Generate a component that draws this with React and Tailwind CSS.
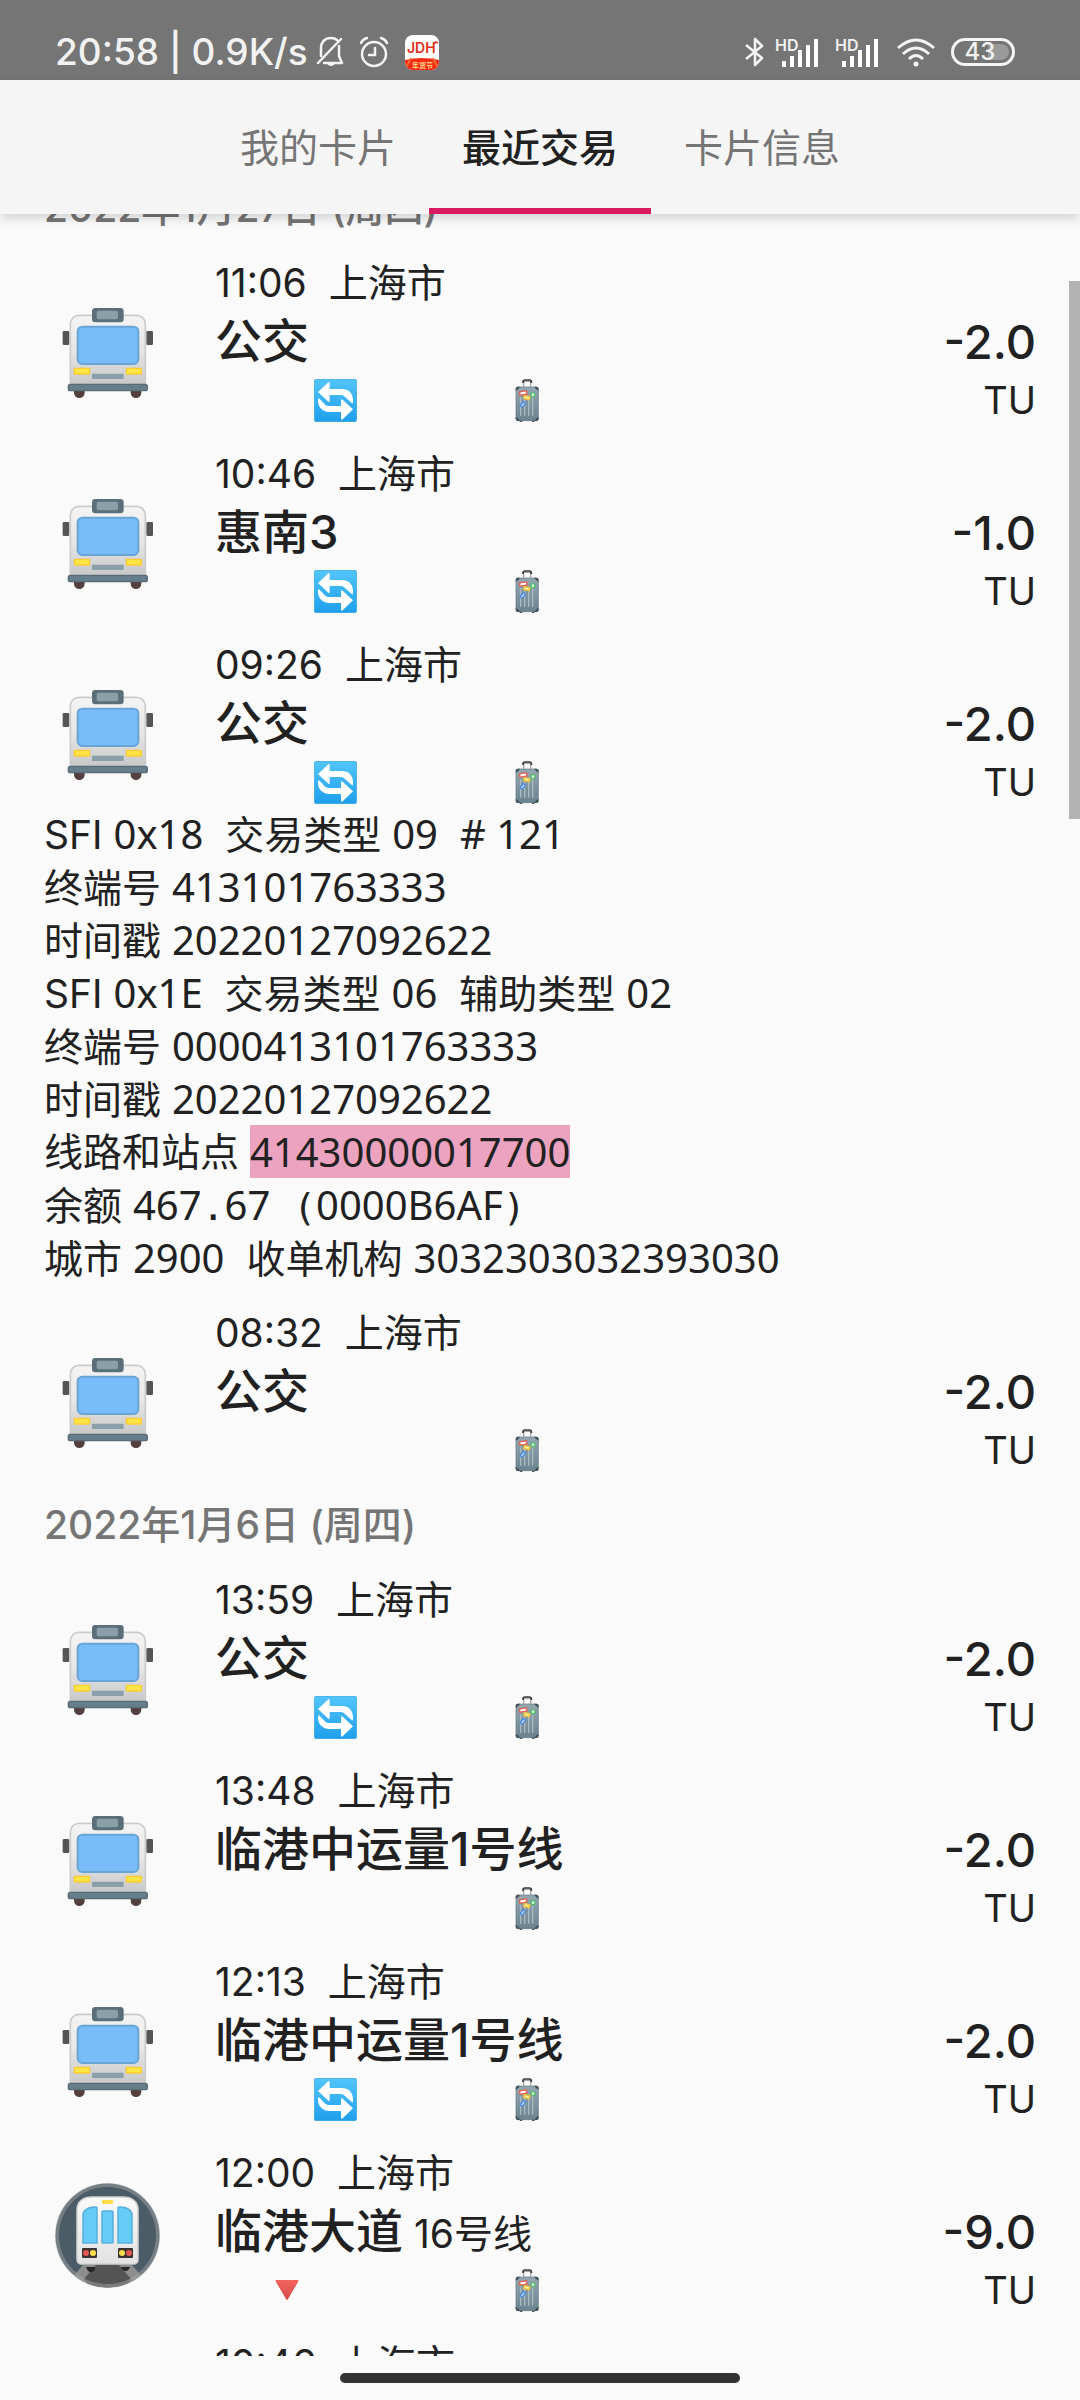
import React from "react";

const CJK = "font-['Inter','Noto_Sans_CJK_SC',sans-serif]";

const tabs = ["我的卡片", "最近交易", "卡片信息"];

const sections = [
  {
    date: "2022年1月27日 (周四)",
    rows: [
      { time: "11:06", title: "公交", transfer: true, amount: "-2.0" },
      { time: "10:46", title: "惠南3", transfer: true, amount: "-1.0" },
      { time: "09:26", title: "公交", transfer: true, amount: "-2.0", details: true },
      { time: "08:32", title: "公交", amount: "-2.0" },
    ],
  },
  {
    date: "2022年1月6日 (周四)",
    rows: [
      { time: "13:59", title: "公交", transfer: true, amount: "-2.0" },
      { time: "13:48", title: "临港中运量1号线", amount: "-2.0" },
      { time: "12:13", title: "临港中运量1号线", transfer: true, amount: "-2.0" },
      { time: "12:00", title: "临港大道", line: "16号线", metro: true, exit: true, amount: "-9.0" },
      { time: "10:46", title: "公交", amount: "-2.0" },
    ],
  },
];

function Bus() {
  return (
    <svg viewBox="15 9 315 315" className="size-[105px]" role="img" aria-label="公交车">
      <defs>
        <linearGradient id="busBody" x1="0" y1="0" x2="0" y2="1">
          <stop offset="0" stopColor="#f4f4f4" />
          <stop offset="0.5" stopColor="#e6e6e6" />
          <stop offset="1" stopColor="#c6c6c6" />
        </linearGradient>
      </defs>
      <path d="M72 300h32v8a16 16 0 0 1-32 0zM242 300h32v8a16 16 0 0 1-32 0z" fill="#543f3f" />
      <rect x="38" y="123" width="20" height="42" rx="4" fill="#555" />
      <rect x="289" y="123" width="20" height="42" rx="4" fill="#555" />
      <path d="M61 290V102a26 26 0 0 1 26-26h173a26 26 0 0 1 26 26v188z" fill="url(#busBody)" stroke="#cbcbcb" strokeWidth="5" />
      <rect x="126" y="54" width="95" height="43" rx="10" fill="#5b6f78" />
      <rect x="140" y="62" width="64" height="26" rx="6" fill="#8b9fa9" />
      <rect x="83" y="110" width="182" height="112" rx="14" fill="#78bdf9" stroke="#68a4d6" strokeWidth="6" />
      <rect x="73" y="235" width="46" height="17" rx="2" fill="#ffe645" stroke="#fbcb35" strokeWidth="4" />
      <rect x="229" y="235" width="45" height="17" rx="2" fill="#ffe645" stroke="#fbcb35" strokeWidth="4" />
      <rect x="126" y="251" width="95" height="16" rx="2" fill="#8b9fa9" />
      <rect x="55" y="283" width="237" height="19" rx="6" fill="#667e89" stroke="#586c76" strokeWidth="4" />
    </svg>
  );
}

function Metro() {
  return (
    <svg viewBox="0 0 105 105" className="size-[105px]" role="img" aria-label="地铁">
      <defs>
        <clipPath id="tunnel"><circle cx="52.500" cy="52.500" r="52" /></clipPath>
        <linearGradient id="metroBody" x1="0" y1="0" x2="0" y2="1">
          <stop offset="0" stopColor="#fafafa" />
          <stop offset="1" stopColor="#e2e2e2" />
        </linearGradient>
      </defs>
      <g clipPath="url(#tunnel)">
        <rect width="105" height="105" fill="#4c5c66" />
        <path d="M28 82h49l20 23H8z" fill="#8d8d8d" />
        <path d="M41 82h23l12 14-6 9H35l-6-9z" fill="#545454" />
      </g>
      <circle cx="52.500" cy="52.500" r="50.500" fill="none" stroke="#aaa" strokeOpacity="0.450" strokeWidth="4" />
      <path d="M31 84h9a4 4 0 0 1-8 2zM66 84h9l-1 2a4 4 0 0 1-7 0z" fill="#262626" />
      <path d="M22 76V27c0-9 7-13 15-13h31c8 0 15 4 15 13v49q0 5-5 5H27q-5 0-5-5z" fill="url(#metroBody)" stroke="#d2d2d2" strokeWidth="1.500" />
      <rect x="47" y="17" width="11" height="4" rx="1" fill="#fddc4a" />
      <g fill="#66cbf6" stroke="#56aeda" strokeWidth="1.500">
        <path d="M28 60V31q1-6 11-7h2q1 0 1 1v35z" />
        <rect x="47" y="28" width="11" height="32" rx="1" />
        <path d="M77 60V31q-1-6-11-7h-2q-1 0-1 1v35z" />
      </g>
      <rect x="27" y="65" width="15" height="10" rx="1" fill="#3b3331" />
      <rect x="63" y="65" width="15" height="10" rx="1" fill="#3b3331" />
      <circle cx="31" cy="70" r="3" fill="#e25550" />
      <circle cx="38" cy="70" r="3" fill="#fbdc4c" />
      <circle cx="67" cy="70" r="3" fill="#fbdc4c" />
      <circle cx="74" cy="70" r="3" fill="#e25550" />
    </svg>
  );
}

function Transfer() {
  return (
    <svg viewBox="39 27 129 129" className="size-[43px]" role="img" aria-label="换乘">
      <defs>
        <linearGradient id="transferBg" x1="0" y1="0" x2="0" y2="1">
          <stop offset="0" stopColor="#52c5fb" />
          <stop offset="1" stopColor="#1f9fec" />
        </linearGradient>
      </defs>
      <rect x="40" y="28" width="127" height="127" rx="6" fill="url(#transferBg)" stroke="#2f9fdc" strokeWidth="2" />
      <path d="M51 66L82 37q4-2 4 3v17h37c19 0 32 12 33 32q0 14-3 11l-22-20q-4-5-11-5H86v18q0 5-4 2z" fill="#fff" />
      <path d="M156 118l-31 30q-5 3-5-2v-20H86c-20 0-34-12-35-32q0-12 3-9l19 19q4 4 12 4h35V91q0-5 5-2z" fill="#fff" />
    </svg>
  );
}

function Suitcase() {
  return (
    <svg viewBox="643 27 72 129" className="h-[43px] w-[24px]" role="img" aria-label="行程">
      <defs>
        <linearGradient id="caseBody" x1="0" y1="0" x2="0" y2="1">
          <stop offset="0" stopColor="#94a7b0" />
          <stop offset="1" stopColor="#6b838f" />
        </linearGradient>
      </defs>
      <path d="M669 50V37q0-3 3-3h15q3 0 3 3v13" fill="none" stroke="#a5a5a5" strokeWidth="4" />
      <path d="M667 39v-3q0-6 6-6h13q6 0 6 6v3" fill="none" stroke="#383838" strokeWidth="5" />
      <path d="M656 150h9v6h-7zM694 150h9l-2 6h-7z" fill="#49565c" />
      <rect x="646" y="51" width="67" height="101" rx="7" fill="url(#caseBody)" stroke="#62757f" strokeWidth="2" />
      <path d="M645 62V57q0-7 7-7h6q-3 9-13 12zM714 62V57q0-7-7-7h-6q3 9 13 12zM645 141v5q0 7 7 7h6q-3-9-13-12zM714 141v5q0 7-7 7h-6q3-9 13-12z" fill="#44535b" />
      <path d="M660 82v55M672 82v55M684 82v55M696 82v55" stroke="#a9bac1" strokeWidth="4" />
      <rect x="657" y="64" width="21" height="10" fill="#fff" stroke="#e35c50" strokeWidth="4" transform="rotate(-10 667 69)" />
      <rect x="670" y="78" width="17" height="9" fill="#fff3a8" stroke="#f2c238" strokeWidth="4" transform="rotate(12 678 82)" />
      <circle cx="697" cy="74" r="6" fill="#e5ffe8" stroke="#4fbf68" strokeWidth="4" />
      <rect x="658" y="99" width="16" height="9" rx="3" fill="#b8d6ff" stroke="#4a86e0" strokeWidth="4" transform="rotate(-50 666 103)" />
    </svg>
  );
}

function Exit() {
  return (
    <svg viewBox="0 0 24 22" className="h-[22px] w-[24px]" role="img" aria-label="出站">
      <defs>
        <linearGradient id="exitFill" x1="0" y1="0" x2="0" y2="1">
          <stop offset="0" stopColor="#f2655f" />
          <stop offset="1" stopColor="#d44a47" />
        </linearGradient>
      </defs>
      <path d="M1 1h22q1 0 0 2L13 20q-1 2-2 0L1 3q-1-2 0-2z" fill="url(#exitFill)" />
    </svg>
  );
}

function Signal() {
  return (
    <span className="flex h-[32px] w-[44px] items-start">
      <span className="w-0 overflow-visible text-[16px] leading-[18px] font-semibold">HD</span>
      <svg viewBox="0 0 44 32" className="h-[32px] w-[44px]" aria-hidden="true">
        <path d="M7 25h4v6H7zM15 20h4v11h-4zM23 14h4v17h-4zM31 9h4v22h-4zM39 3h4v28h-4z" fill="#fff" />
      </svg>
    </span>
  );
}

function StatusBar() {
  return (
    <div className="flex h-[80px] shrink-0 justify-between bg-[#757575] pt-[32px] pr-[65px] pl-[55px] text-[#f2f2f2]">
      <div className="flex h-[40px] items-center">
        <span className="text-[37px] leading-[40px] font-medium whitespace-pre">20:58 | 0.9K/s</span>
        <svg viewBox="0 0 28 32" className="ml-[8px] h-[32px] w-[28px]" fill="none" stroke="#f4f4f4" strokeWidth="2.500" aria-hidden="true">
          <path d="M5 20V12C5 6 9 2 15 2q4 0 6 2M23 10v10l3 7H8M2 27L25 3" strokeLinecap="round" strokeLinejoin="round" />
          <path d="M11 27h8q-1 3-4 3t-4-3z" fill="#f4f4f4" stroke="none" />
        </svg>
        <svg viewBox="0 0 30 32" className="ml-[15px] h-[32px] w-[30px]" fill="none" stroke="#f4f4f4" strokeWidth="2.500" strokeLinecap="round" aria-hidden="true">
          <circle cx="15" cy="18" r="12" />
          <path d="M16 12v7H10M2 7q2-4 6-5M28 7q-2-4-6-5" />
        </svg>
        <svg viewBox="0 0 34 35" className="ml-[16px] h-[35px] w-[34px]" aria-label="JDH 年货节">
          <defs>
            <clipPath id="jdClip"><rect width="34" height="35" rx="8" /></clipPath>
          </defs>
          <g clipPath="url(#jdClip)">
            <rect width="34" height="35" fill="#fff" />
            <path d="M0 25q17-4 34 0v10H0z" fill="#f42a12" />
            <path d="M0 35l6-12M34 35l-6-12" stroke="#ff6a35" strokeWidth="2" />
          </g>
          <text x="2" y="18" fill="#e02d1b" fontSize="14" fontWeight="600">JDH</text>
          <path d="M29 9l2-2 2 1" stroke="#e02d1b" strokeWidth="1.500" fill="none" />
          <text x="7" y="33" fill="#ffd98a" fontSize="7" fontWeight="700" fontFamily="Noto Sans CJK SC">年货节</text>
        </svg>
      </div>
      <div className="flex h-[40px] items-center">
        <svg viewBox="0 0 20 30" className="h-[30px] w-[20px]" fill="none" stroke="#f4f4f4" strokeWidth="2.500" strokeLinejoin="round" aria-hidden="true">
          <path d="M1 8l16 13-7 7V2l7 7L1 22" />
        </svg>
        <span className="ml-[10px]"><Signal /></span>
        <span className="ml-[16px]"><Signal /></span>
        <svg viewBox="0 0 38 30" className="ml-[18px] h-[30px] w-[38px]" fill="none" stroke="#f4f4f4" strokeWidth="3" aria-hidden="true">
          <path d="M1 11q18-16 36 0M6 17q13-12 26 0M12 22q7-7 14 0" />
          <circle cx="19" cy="27" r="2.500" fill="#f4f4f4" stroke="none" />
        </svg>
        <span className="ml-[16px] flex h-[28px] w-[64px] rounded-full border-3 border-[#f4f4f4] p-[3px]">
          <span className="flex flex-1 items-center justify-center rounded-full bg-[linear-gradient(90deg,#757575_60%,#9a9a9a_60%)] pr-[6px] text-[24px] leading-[16px] font-medium">43</span>
        </span>
      </div>
    </div>
  );
}

function Tabs() {
  return (
    <nav role="tablist" className="z-10 flex h-[134px] shrink-0 justify-center bg-[#f5f5f5] text-[39px] shadow-[0_4px_10px_rgba(0,0,0,0.16)]">
      {tabs.map((t, i) => (
        <button
          key={t}
          role="tab"
          aria-selected={i === 1}
          className={
            i === 1
              ? "border-b-6 border-[#d81b60] px-[33px] pt-[8px] font-medium text-[#212121]"
              : "border-b-6 border-transparent px-[33px] pt-[8px] text-[#757575]"
          }
        >
          {t}
        </button>
      ))}
    </nav>
  );
}

function Mono({ children }) {
  return <span className="font-['Noto_Sans'] text-[40px]">{children}</span>;
}

function Punct({ children }) {
  return <span className="font-['DejaVu_Sans_Mono'] text-[38px] font-extralight">{children}</span>;
}

function Details() {
  return (
    <div className="-mt-[3px] px-[44px] pb-[3px] text-[39px] leading-[53px] whitespace-pre text-[#212121] [&>p]:h-[53px]">
      <p>SFI <Mono>0x18</Mono>{"  交易类型 "}<Mono>09</Mono>{"  "}<Mono># 121</Mono></p>
      <p>终端号 <Mono>413101763333</Mono></p>
      <p>时间戳 <Mono>20220127092622</Mono></p>
      <p>SFI <Mono>0x1E</Mono>{"  交易类型 "}<Mono>06</Mono>{"  辅助类型 "}<Mono>02</Mono></p>
      <p>终端号 <Mono>0000413101763333</Mono></p>
      <p>时间戳 <Mono>20220127092622</Mono></p>
      <p className="flex">线路和站点 <mark className="bg-[#eba3bf] text-[#212121]"><Mono>41430000017700</Mono></mark></p>
      <p>余额 <Mono>467</Mono><Punct>.</Punct><Mono>67</Mono><Punct>{" ("}</Punct><Mono>0000B6AF</Mono><Punct>)</Punct></p>
      <p>城市 <Mono>2900</Mono>{"  收单机构 "}<Mono>3032303032393030</Mono></p>
    </div>
  );
}

function Row({ row }) {
  return (
    <li>
      <div className="flex h-[191px] pt-[20px] pr-[44px] pl-[55px] text-[#212121]">
        <div className="w-[160px] shrink-0 pt-[36px]">{row.metro ? <Metro /> : <Bus />}</div>
        <div className="min-w-0 flex-1">
          <p className="h-[52px] text-[39px] leading-[52px] whitespace-pre">{row.time}{"  "}{"上海市"}</p>
          <p className="h-[64px] text-[47px] leading-[64px] font-medium whitespace-pre">
            {row.title}
            {row.line && <span className="text-[39px] font-normal">{" " + row.line}</span>}
          </p>
          <div className="grid h-[54px] grid-cols-[repeat(8,48px)] items-center justify-items-center">
            {row.exit && <span className="col-start-2 row-start-1"><Exit /></span>}
            {row.transfer && <span className="col-start-3 row-start-1"><Transfer /></span>}
            <span className="col-start-7 row-start-1"><Suitcase /></span>
          </div>
        </div>
        <div className="pt-[53px] text-right">
          <p className="text-[47px] leading-[64px] font-medium">{row.amount}</p>
          <p className="text-[38px] leading-[52px]">TU</p>
        </div>
      </div>
      {row.details && <Details />}
    </li>
  );
}

export default function App() {
  return (
    <div className={`flex h-screen flex-col overflow-hidden bg-[#fafafa] ${CJK}`}>
      <StatusBar />
      <Tabs />
      <main className="relative min-h-0 flex-1 overflow-hidden">
        <div className="-mt-[53px]">
          {sections.map((s) => (
            <section key={s.date}>
              <h2 className="h-[76px] px-[44px] pt-[20px] text-[39px] leading-[54px] font-medium text-[#757575]">{s.date}</h2>
              <ul>
                {s.rows.map((r) => <Row key={r.time} row={r} />)}
              </ul>
            </section>
          ))}
        </div>
        <div className="absolute top-[67px] right-0 h-[538px] w-[11px] bg-[#b3b3b3]" />
      </main>
      <footer className="flex h-[44px] shrink-0 justify-center pt-[17px]">
        <div className="h-[10px] w-[400px] rounded-full bg-[#333]" />
      </footer>
    </div>
  );
}
